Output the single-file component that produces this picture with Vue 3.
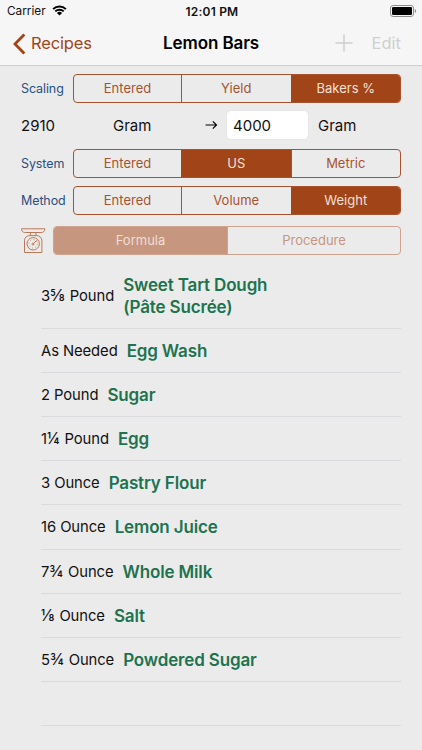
<script setup>
import { ref } from 'vue'

const settings = ref([
  { label: 'Scaling', options: ['Entered', 'Yield', 'Bakers %'], selected: 2 },
  { label: 'System', options: ['Entered', 'US', 'Metric'], selected: 1 },
  { label: 'Method', options: ['Entered', 'Volume', 'Weight'], selected: 2 },
])
const target = ref('4000')
const ingredients = [
  { whole: '3', fraction: '⅝', unit: 'Pound', name: ['Sweet Tart Dough', '(Pâte Sucrée)'] },
  { whole: 'As', fraction: '', unit: 'Needed', name: ['Egg Wash'] },
  { whole: '2', fraction: '', unit: 'Pound', name: ['Sugar'] },
  { whole: '1', fraction: '¼', unit: 'Pound', name: ['Egg'] },
  { whole: '3', fraction: '', unit: 'Ounce', name: ['Pastry Flour'] },
  { whole: '16', fraction: '', unit: 'Ounce', name: ['Lemon Juice'] },
  { whole: '7', fraction: '¾', unit: 'Ounce', name: ['Whole Milk'] },
  { whole: '', fraction: '⅛', unit: 'Ounce', name: ['Salt'] },
  { whole: '5', fraction: '¾', unit: 'Ounce', name: ['Powdered Sugar'] },
]
</script>

<template>
  <div class="screen">
    <header class="top">
      <div class="status">
        <div class="carrier">
          <span>Carrier</span>
          <svg class="wifi" width="15" height="11" viewBox="0 0 15 11">
            <path d="M1.1 4.1A9.2 9.2 0 0 1 13.9 4.1M3.3 6.4A6 6 0 0 1 11.7 6.4" fill="none" stroke="#000" stroke-width="1.9" />
            <path d="M4.9 7.9A3.8 3.8 0 0 1 10.1 7.9L7.5 10.6Z" fill="#000" />
          </svg>
        </div>
        <span class="clock">12:01 PM</span>
        <svg class="battery" width="27" height="12" viewBox="0 0 27 12">
          <rect x="0.5" y="0.5" width="23" height="11" rx="2.6" fill="none" stroke="#8b8b8b" />
          <rect x="2" y="2" width="20" height="8" rx="1.3" fill="#000" />
          <path d="M24.8 4v4c1.8-.7 1.8-3.3 0-4Z" fill="#8b8b8b" />
        </svg>
      </div>
      <nav class="nav">
        <div class="back">
          <svg width="13" height="22" viewBox="0 0 13 22">
            <path d="M11.3 1.5 2 11l9.3 9.5" fill="none" stroke="#a14417" stroke-width="2.8" />
          </svg>
          <span>Recipes</span>
        </div>
        <h1 class="title">Lemon Bars</h1>
        <div class="actions">
          <svg width="18" height="18" viewBox="0 0 18 18">
            <path d="M9 .5v17M.5 9h17" stroke="#cfcfcf" stroke-width="1.5" />
          </svg>
          <span>Edit</span>
        </div>
      </nav>
    </header>

    <main class="controls">
      <template v-for="(row, r) in settings" :key="row.label">
        <div class="setting" :class="'setting-' + r">
          <span class="label">{{ row.label }}</span>
          <div class="segments">
            <button
              v-for="(option, i) in row.options"
              :key="option"
              class="segment"
              :class="{ on: row.selected === i }"
              @click="row.selected = i"
            >{{ option }}</button>
          </div>
        </div>
        <div v-if="r === 0" class="convert">
          <span class="from">2910</span>
          <span class="unit">Gram</span>
          <svg class="arrow" width="13" height="10" viewBox="0 0 13 10">
            <path d="M.5 5h11M7.8 1.3 11.5 5 7.8 8.7" fill="none" stroke="#000" stroke-width="1.2" />
          </svg>
          <input v-model="target" class="target" />
          <span class="to">Gram</span>
        </div>
      </template>

      <div class="tabs">
        <svg class="scale" width="26" height="26" viewBox="0 0 26 26" fill="none" stroke="#bd7857" stroke-width="1">
          <path d="M.5.8h23.400c0 2.600-1.500 3.700-3.800 3.700H4.300C2 4.500.5 3.400.5.8Z" />
          <path d="M9.400 4.600v3M15 4.600v3M3.500 24.500V12.800c0-3.200 2.300-5.200 5.300-5.200h6.800c3 0 5.300 2 5.300 5.200v11.700Z" />
          <circle cx="12.200" cy="15.800" r="6.200" />
          <circle cx="12.200" cy="15.800" r="4.200" stroke-dasharray=".8 2.5" stroke-width=".9" />
          <circle cx="12" cy="16.100" r="1" />
          <path d="m12.700 15.300 3-3" />
        </svg>
        <div class="segments faded">
          <button class="segment on">Formula</button>
          <button class="segment">Procedure</button>
        </div>
      </div>
    </main>

    <ul class="list">
      <li v-for="item in ingredients" :key="item.name[0]" class="item" :class="{ tall: item.name.length > 1 }">
        <span class="amount">{{ item.whole }}<span v-if="item.fraction" class="fraction">{{ item.fraction }}</span> {{ item.unit }}</span>
        <span class="name"><span v-for="line in item.name" :key="line" class="line">{{ line }}</span></span>
      </li>
      <li class="item"></li>
    </ul>
  </div>
</template>

<style>
body {
  margin: 0;
  background: #ebebeb;
}
</style>

<style scoped>
.screen {
  width: 422px;
  height: 750px;
  overflow: hidden;
  background: #ebebeb;
  color: #111;
  font-family: Inter, "Liberation Sans", sans-serif;
}
.top {
  height: 65px;
  background: #f6f6f6;
  border-bottom: 1px solid #cdcdcd;
}
.status {
  display: grid;
  grid-template-columns: 1fr auto 1fr;
  align-items: center;
  height: 22px;
  padding: 0 5px 0 7px;
  font-size: 11.8px;
}
.carrier {
  display: flex;
  align-items: center;
  gap: 6px;
}
.carrier span {
  margin-top: -1px;
}
.wifi {
  margin-top: -1px;
}
.clock {
  font-weight: 600;
  font-size: 12px;
  letter-spacing: 0.2px;
}
.battery {
  justify-self: end;
  margin-top: -1px;
}
.nav {
  display: grid;
  grid-template-columns: 1fr auto 1fr;
  align-items: center;
  height: 43px;
  padding: 0 21px 0 13px;
  font-size: 16.5px;
}
.back {
  display: flex;
  align-items: center;
  gap: 5px;
  color: #a14417;
}
.back span {
  margin-top: -1px;
  letter-spacing: -0.15px;
}
.title {
  margin: -1px 0 0;
  padding-left: 8px;
  font-size: 17px;
  font-weight: 600;
  letter-spacing: -0.1px;
  color: #000;
}
.actions {
  display: flex;
  align-items: center;
  justify-content: flex-end;
  gap: 19px;
  color: #cfcfcf;
}
.actions svg {
  margin-top: -2px;
}
.actions span {
  margin-top: -1px;
}
.controls {
  padding: 8px 21px 0;
}
.setting {
  display: flex;
  align-items: center;
  height: 29px;
}
.setting-1 {
  margin-top: 9px;
}
.setting-2 {
  margin-top: 8px;
}
.label {
  width: 52px;
  margin-top: -1px;
  font-size: 12.5px;
  letter-spacing: -0.1px;
  color: #2b4f80;
}
.segments {
  display: flex;
  flex: 1;
  box-sizing: border-box;
  height: 29px;
  border: 1px solid #a85330;
  border-radius: 4px;
  overflow: hidden;
}
.segment {
  box-sizing: border-box;
  flex: 1 1 0;
  padding: 0 0 1px;
  border: 0;
  background: none;
  color: #a85330;
  font: 13px Inter, "Liberation Sans", sans-serif;
}
.segment:first-child {
  flex: 0 0 107px;
}
.segment + .segment {
  border-left: 1px solid #a85330;
}
.segment.on {
  background: #a14417;
  border-color: #a14417;
  color: #f5e0d6;
}
.convert {
  display: flex;
  align-items: center;
  height: 30px;
  margin-top: 7px;
  font-size: 15px;
}
.from {
  width: 92px;
}
.unit {
  width: 92px;
}
.target {
  box-sizing: border-box;
  width: 83px;
  height: 30px;
  margin: 0 9px 0 8px;
  padding: 0 6px;
  border: 1px solid #e6e6e6;
  border-radius: 5px;
  background: #fff;
  color: #111;
  font: 15px Inter, "Liberation Sans", sans-serif;
}
.tabs {
  display: flex;
  align-items: center;
  gap: 6px;
  margin-top: 11px;
}
.faded,
.faded .segment + .segment {
  border-color: #cda28e;
}
.faded .segment {
  color: #c6967f;
}
.faded .segment:first-child {
  flex-basis: 173px;
}
.faded .segment.on {
  background: #c6967f;
  color: #efdfd7;
}
.list {
  margin: 9px 21px 0 41px;
  padding: 0;
  list-style: none;
}
.item {
  display: flex;
  align-items: center;
  box-sizing: border-box;
  gap: 9px;
  height: 44.12px;
  padding-top: 1px;
  border-bottom: 1px solid #dadade;
}
.tall {
  height: 65px;
  padding-top: 0;
}
.amount {
  font-size: 14.8px;
  letter-spacing: -0.08px;
}
.fraction {
  margin-right: 1px;
  font-size: 15.6px;
  line-height: 1;
}
.name {
  font-size: 17px;
  line-height: 22px;
  font-weight: 600;
  letter-spacing: -0.15px;
  color: #1d7350;
}
.line {
  display: block;
}
</style>
